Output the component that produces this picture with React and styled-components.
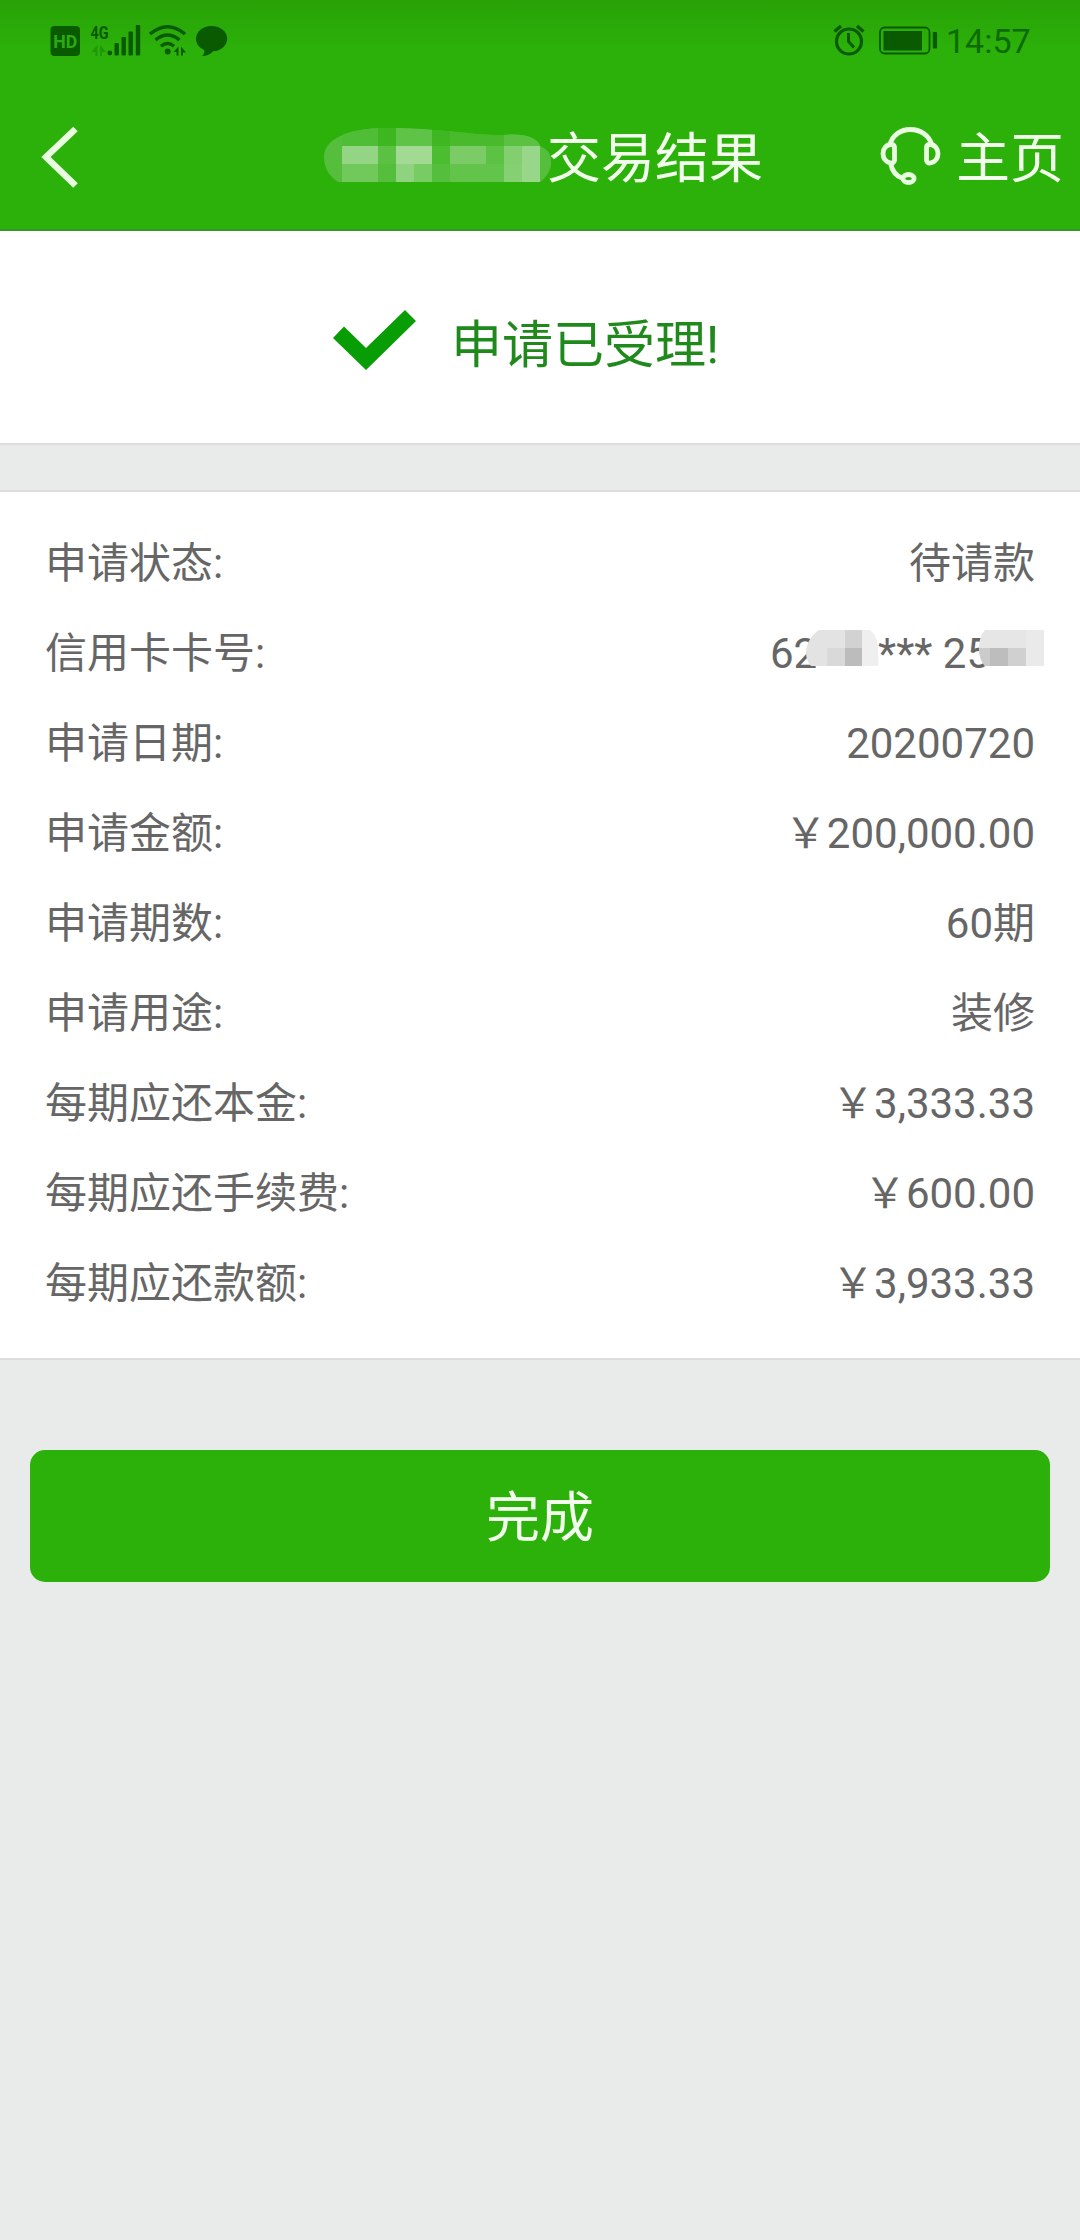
import React from "react";
import styled, { createGlobalStyle } from "styled-components";

const GlobalStyle = createGlobalStyle`
  * {
    box-sizing: border-box;
  }
  body {
    margin: 0;
    background: #e8ebea;
    font-family: Roboto, "Noto Sans CJK SC", sans-serif;
  }
`;

const Page = styled.div`
  min-height: 2240px;
  display: flex;
  flex-direction: column;
  background: #e8ebea;
`;

const Header = styled.header`
  height: 231px;
  background: linear-gradient(#28a206 0, #2cb10a 50px);
  border-bottom: 2px solid #35992a;
`;

const StatusBar = styled.div`
  height: 80px;
  padding: 0 50px;
  display: flex;
  align-items: center;
  justify-content: space-between;
  color: #0a5a02;
`;

const StatusGroup = styled.div`
  display: flex;
  align-items: center;
`;

const Clock = styled.span`
  width: 84px;
  margin-left: 7px;
  font-size: 34px;
  line-height: 40px;
  color: #0d6b04;
  padding-top: 2px;
`;

const NavBar = styled.nav`
  height: 149px;
  padding: 4px 16px 0 40px;
  display: grid;
  grid-template-columns: 284px 1fr auto;
  align-items: center;
  color: #f2ffec;
`;

const BackButton = styled.button`
  display: flex;
  width: 44px;
  padding: 0;
  border: none;
  background: none;
`;

const Title = styled.h1`
  display: flex;
  align-items: center;
  margin: 0;
  padding-top: 7px;
  font-size: 54px;
  font-weight: 400;
  line-height: 80px;
  white-space: nowrap;
`;

const HomeLink = styled.a`
  display: flex;
  align-items: center;
  gap: 14px;
  font-size: 54px;
  line-height: 80px;
`;

const HomeText = styled.span`
  padding-top: 7px;
`;

const ResultPanel = styled.section`
  height: 214px;
  padding: 4px 0 0 332px;
  display: flex;
  align-items: center;
  gap: 33px;
  background: #fff;
  border-bottom: 2px solid #dcdddc;
`;

const ResultText = styled.p`
  margin: 0;
  padding-top: 13px;
  font-size: 51px;
  line-height: 76px;
  color: #20891c;
`;

const DetailPanel = styled.section`
  margin-top: 45px;
  padding: 27px 45px 29px 45px;
  background: #fff;
  border-top: 2px solid #dcdddc;
  border-bottom: 2px solid #dcdddc;
`;

const DetailRow = styled.div`
  height: 90px;
  display: flex;
  align-items: center;
  justify-content: space-between;
  font-size: 42px;
  line-height: 60px;
  color: #666;
`;

const CardNumber = styled.span`
  display: flex;
  align-items: center;
  margin-right: -9px;
`;

const MaskSlot = styled.span`
  position: relative;
  display: flex;
  margin: ${({ $margin }) => $margin};
`;

const DoneButton = styled.button`
  margin: 90px 30px 0;
  padding-top: 6px;
  height: 132px;
  border: none;
  border-radius: 15px;
  background: #2cb10a;
  color: #f2ffec;
  font-family: inherit;
  font-size: 54px;
  line-height: 80px;
`;

const details = [
  { label: "申请状态:", value: "待请款" },
  { label: "信用卡卡号:", card: true },
  { label: "申请日期:", value: "20200720" },
  { label: "申请金额:", value: "￥200,000.00" },
  { label: "申请期数:", value: "60期" },
  { label: "申请用途:", value: "装修" },
  { label: "每期应还本金:", value: "￥3,333.33" },
  { label: "每期应还手续费:", value: "￥600.00" },
  { label: "每期应还款额:", value: "￥3,933.33" },
];

// each tile is [x, y, width, height, color]
const titleTiles = [
  [0, 0, 227, 54, "#55bf3d"],
  [18, 0, 36, 18, "#50bd36"],
  [54, 0, 18, 18, "#3db620"],
  [72, 0, 36, 18, "#5fc348"],
  [108, 0, 18, 18, "#3fb722"],
  [126, 0, 54, 18, "#48ba2c"],
  [180, 0, 47, 18, "#5bc142"],
  [18, 18, 36, 18, "#94d585"],
  [54, 18, 18, 18, "#5bc143"],
  [72, 18, 36, 18, "#a2da94"],
  [108, 18, 18, 18, "#4cbc31"],
  [126, 18, 36, 18, "#7bcc67"],
  [162, 18, 18, 18, "#5cc244"],
  [180, 18, 18, 18, "#83cf70"],
  [198, 18, 18, 36, "#98d68a"],
  [18, 36, 36, 18, "#70c95a"],
  [72, 36, 18, 18, "#8fd280"],
  [90, 36, 18, 18, "#78cc64"],
  [126, 36, 54, 18, "#63c44c"],
  [180, 36, 18, 18, "#85d073"],
];

const cardStartTiles = [
  [0, 0, 74, 36, "#e3e3e3"],
  [22, 18, 18, 18, "#d9d9d9"],
  [40, 0, 17, 18, "#d2d2d2"],
  [40, 18, 17, 18, "#bcbcbc"],
  [57, 0, 17, 36, "#efefef"],
];

const cardEndTiles = [
  [0, 0, 65, 36, "#e6e6e6"],
  [0, 18, 11, 18, "#cbcbcb"],
  [11, 18, 18, 18, "#bdbdbd"],
  [29, 18, 18, 18, "#d0d0d0"],
  [47, 0, 18, 36, "#eaeaea"],
];

const Mosaic = ({ id, width, height, outline, tiles }) => (
  <svg width={width} height={height} shapeRendering="crispEdges">
    <clipPath id={id}>
      <path d={outline} />
    </clipPath>
    <g clipPath={`url(#${id})`}>
      {tiles.map(([x, y, w, h, fill], index) => (
        <rect key={index} x={x} y={y} width={w} height={h} fill={fill} />
      ))}
    </g>
  </svg>
);

const SignalIcons = () => (
  <svg width="180" height="36" viewBox="50 22 180 36" fill="currentColor">
    <rect x="50.5" y="26" width="29.5" height="30" rx="4" />
    <text
      x="65.3"
      y="47.5"
      fontSize="18"
      fontWeight="700"
      textAnchor="middle"
      textLength="24"
      lengthAdjust="spacingAndGlyphs"
      fill="#2cab10"
    >
      HD
    </text>
    <text
      x="90.5"
      y="38.5"
      fontSize="19"
      fontWeight="700"
      textLength="18"
      lengthAdjust="spacingAndGlyphs"
    >
      4G
    </text>
    <path d="M97.500 45v11h-2v-4h-4zM100 45v11h2v-4h4z" opacity="0.3" />
    <circle cx="109.8" cy="53" r="2.4" />
    <rect x="114.5" y="43" width="4.4" height="12.5" rx="1" />
    <rect x="121.5" y="37" width="4.4" height="18.5" rx="1" />
    <rect x="128.5" y="31.5" width="4.4" height="24" rx="1" />
    <rect x="135.8" y="25" width="4.4" height="30.5" rx="1" />
    <g fill="none" stroke="currentColor" strokeWidth="3.4">
      <path d="M150 34Q167.500 19.500 185 34" />
      <path d="M155.500 40Q167.500 30 179.500 40" />
      <path d="M161 46.300Q167.500 40.500 174 46.300" />
    </g>
    <circle cx="167.700" cy="51.500" r="3" />
    <path d="M178.500 46.500v9h-2v-3.500h-3zM181 46.500v9h2v-3h3z" />
    <path d="M211.500 26c9 0 15.700 5.600 15.700 12.600s-6.500 12.700-14 12.700c-3 3-6 4.700-11 4.700 2-2 2.500-4 2-6-5-2-8.200-6-8.200-11.400 0-7 6.500-12.600 15.500-12.600z" />
  </svg>
);

const AlarmBatteryIcons = () => (
  <svg width="106" height="36" viewBox="833 22 106 36" fill="none" stroke="currentColor">
    <circle cx="849" cy="41.500" r="12.500" strokeWidth="3.200" />
    <path d="M848.500 33v8.500l5.500 6" strokeWidth="3" />
    <path d="M834.500 31.500l6.500-5.500M863.500 31.500l-6.500-5.500" strokeWidth="3.400" />
    <rect x="880" y="27.500" width="49.500" height="26" rx="4.500" strokeWidth="1.800" />
    <rect x="883.500" y="31" width="38.500" height="19.500" fill="currentColor" stroke="none" />
    <rect x="932.800" y="32" width="4.300" height="16.500" rx="1" fill="currentColor" stroke="none" />
  </svg>
);

const BackIcon = () => (
  <svg width="40" height="64" viewBox="0 0 40 64" fill="none" stroke="#e9fbe1" strokeWidth="6.500">
    <path d="M35.500 4L6 32L35.500 60.500" />
  </svg>
);

const HeadsetIcon = () => (
  <svg width="62" height="62" viewBox="880 126 62 62" fill="none" stroke="#e9fbe1" strokeWidth="4.800">
    <path d="M890 145C892 135 901 129.500 910.500 129.500S929 135 932 145" />
    <path d="M894.500 147v13.500q-1 3-4 2.500c-5-1-7.500-5-7.500-9.500 0-5 3.500-9 8-9q3 0 3.500 2.500z" />
    <path d="M926.500 147v13.500q1 3 4 2.500c5-1 7.500-5 7.500-9.500 0-5-3.500-9-8-9q-3 0-3.500 2.500z" />
    <path d="M890.500 163c1.500 8 6 13.500 12.500 15.500" />
    <ellipse cx="908.500" cy="178.500" rx="5.600" ry="4" />
  </svg>
);

const CheckIcon = () => (
  <svg width="86" height="64" viewBox="0 0 86 64">
    <path d="M1 31L12 19.500L34 41L73 3L84 14L34 63z" fill="#089c05" />
  </svg>
);

const App = () => {
  return (
    <Page>
      <GlobalStyle />
      <Header>
        <StatusBar>
          <SignalIcons />
          <StatusGroup>
            <AlarmBatteryIcons />
            <Clock>14:57</Clock>
          </StatusGroup>
        </StatusBar>
        <NavBar>
          <BackButton aria-label="返回">
            <BackIcon />
          </BackButton>
          <Title>
            <MaskSlot $margin="-11px -4px 0 0">
              <Mosaic
                id="title-mask"
                width={227}
                height={54}
                outline="M14 54C4 48 0 38 0 29C0 12 22 0 62 0C120 0 150 8 180 7C200 5 214 10 216 18C226 22 228 30 227 38C225 46 221 50 216 54z"
                tiles={titleTiles}
              />
            </MaskSlot>
            交易结果
          </Title>
          <HomeLink>
            <HeadsetIcon />
            <HomeText>主页</HomeText>
          </HomeLink>
        </NavBar>
      </Header>
      <ResultPanel>
        <CheckIcon />
        <ResultText>申请已受理!</ResultText>
      </ResultPanel>
      <DetailPanel>
        {details.map(({ label, value, card }) => (
          <DetailRow key={label}>
            <span>{label}</span>
            {card ? (
              <CardNumber>
                62
                <MaskSlot $margin="-12px -1px 0 -12px">
                  <Mosaic
                    id="card-start-mask"
                    width={74}
                    height={36}
                    outline="M14 0H64C71 4 74 12 73 36H6C-2 28 -1 10 14 0z"
                    tiles={cardStartTiles}
                  />
                </MaskSlot>
                ***&nbsp;25
                <MaskSlot $margin="-12px 0 0 -11px">
                  <Mosaic
                    id="card-end-mask"
                    width={65}
                    height={36}
                    outline="M6 0H65V36H6C-2 28 -2 8 6 0z"
                    tiles={cardEndTiles}
                  />
                </MaskSlot>
              </CardNumber>
            ) : (
              <span>{value}</span>
            )}
          </DetailRow>
        ))}
      </DetailPanel>
      <DoneButton>完成</DoneButton>
    </Page>
  );
};

export default App;
